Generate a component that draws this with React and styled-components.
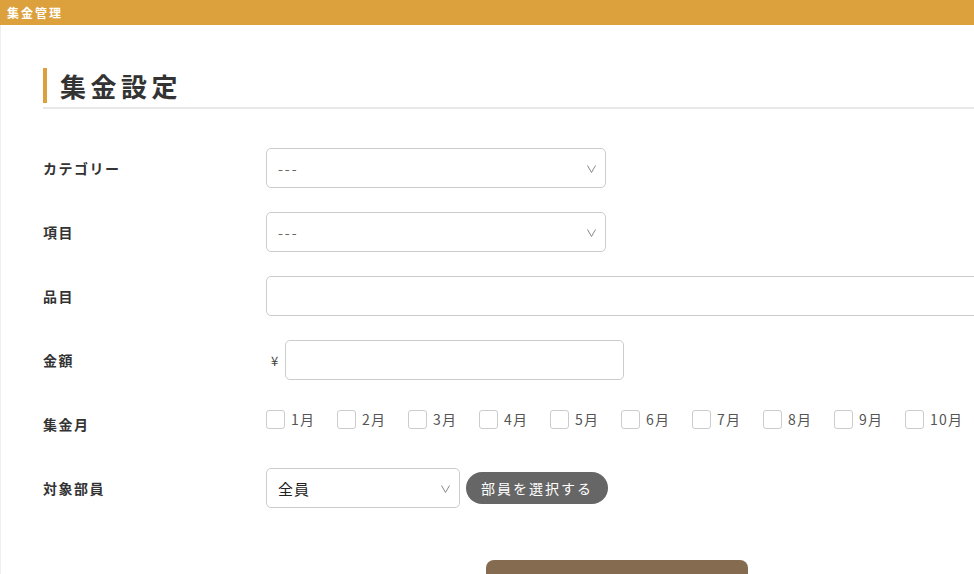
import React from "react";
import styled, { createGlobalStyle } from "styled-components";

const Global = createGlobalStyle`
  html, body { margin: 0; padding: 0; background: #fff; overflow: hidden; }
  body { font-family: "Noto Sans CJK JP", "Noto Sans", sans-serif; color: #333; }
  * { box-sizing: border-box; }
`;

const Page = styled.div`
  width: 974px;
  height: 574px;
  overflow: hidden;
`;

const TopBar = styled.header`
  height: 25px;
  background: #dca13c;
  color: #fff;
  font-size: 12px;
  font-weight: 700;
  line-height: 25px;
  padding-left: 7px;
  letter-spacing: 2px;
`;

const Main = styled.main`
  border-left: 1px solid #eee;
  padding: 43px 0 0 42px;
  height: 549px;
  overflow: hidden;
`;

const HeadingWrap = styled.div`
  border-bottom: 2px solid #e8e8e8;
  padding-bottom: 4px;
  margin-bottom: 39px;
`;

const Heading = styled.h1`
  margin: 0;
  border-left: 4px solid #dca13c;
  padding-left: 13px;
  height: 35px;
  line-height: 35px;
  font-size: 26px;
  font-weight: 700;
  letter-spacing: 4.5px;
  color: #333;
`;

const Row = styled.div`
  display: flex;
  align-items: ${(p) => (p.$top ? "flex-start" : "center")};
  min-height: 40px;
  margin-bottom: 24px;
`;

const Label = styled.div`
  width: 223px;
  flex: none;
  font-size: 14px;
  font-weight: 700;
  color: #333;
  line-height: 40px;
  letter-spacing: 1.5px;
`;

const SelectBox = styled.div`
  position: relative;
  flex: none;
  width: ${(p) => p.$w}px;
  height: 40px;
  border: 1px solid #ccc;
  border-radius: 5px;
  background: #fff;
  display: flex;
  align-items: center;
  padding-left: 11px;
  font-size: ${(p) => (p.$dark ? "15px" : "14px")};
  letter-spacing: ${(p) => (p.$dark ? "1px" : "2px")};
  color: ${(p) => (p.$dark ? "#222" : "#666")};
`;

const Chevron = styled.svg`
  position: absolute;
  right: 9px;
  top: 16px;
`;

const TextInput = styled.div`
  flex: none;
  width: ${(p) => p.$w}px;
  height: 40px;
  border: 1px solid #ccc;
  border-radius: 5px;
  background: #fff;
`;

const Yen = styled.span`
  font-size: 13px;
  color: #444;
  margin: 0 7px 0 5px;
`;

const Checks = styled.div`
  display: flex;
  padding-top: 5px;
`;

const CheckItem = styled.label`
  display: flex;
  align-items: center;
  width: 71px;
  flex: none;
  font-size: 14px;
  color: #555;
  letter-spacing: 1.2px;
`;

const Box = styled.span`
  width: 19px;
  height: 19px;
  border: 1px solid #ccc;
  border-radius: 3px;
  background: #fff;
  margin-right: 6px;
`;

const PillButton = styled.button`
  flex: none;
  margin-left: 6px;
  height: 32px;
  padding: 0 15px;
  border: none;
  border-radius: 16px;
  background: #666;
  color: #fff;
  font-family: inherit;
  font-size: 14px;
  letter-spacing: 2px;
`;

const SubmitWrap = styled.div`
  padding-left: 443px;
  padding-top: 28px;
`;

const Submit = styled.button`
  width: 262px;
  height: 50px;
  border: none;
  border-radius: 8px;
  background: #856b4f;
`;

const Arrow = () => (
  <Chevron width="9" height="8" viewBox="0 0 9 8">
    <path d="M0.5 0.5 L4.5 7.5 L8.5 0.5" fill="none" stroke="#888" strokeWidth="1" />
  </Chevron>
);

const months = ["1月", "2月", "3月", "4月", "5月", "6月", "7月", "8月", "9月", "10月"];

export default function App() {
  return (
    <Page>
      <Global />
      <TopBar>集金管理</TopBar>
      <Main>
        <HeadingWrap>
          <Heading>集金設定</Heading>
        </HeadingWrap>
        <Row>
          <Label>カテゴリー</Label>
          <SelectBox $w={340}>---<Arrow /></SelectBox>
        </Row>
        <Row>
          <Label>項目</Label>
          <SelectBox $w={340}>---<Arrow /></SelectBox>
        </Row>
        <Row>
          <Label>品目</Label>
          <TextInput $w={760} />
        </Row>
        <Row>
          <Label>金額</Label>
          <Yen>¥</Yen>
          <TextInput $w={339} />
        </Row>
        <Row $top>
          <Label>集金月</Label>
          <Checks>
            {months.map((m) => (
              <CheckItem key={m}>
                <Box />
                {m}
              </CheckItem>
            ))}
          </Checks>
        </Row>
        <Row>
          <Label>対象部員</Label>
          <SelectBox $w={194} $dark>全員<Arrow /></SelectBox>
          <PillButton>部員を選択する</PillButton>
        </Row>
        <SubmitWrap>
          <Submit />
        </SubmitWrap>
      </Main>
    </Page>
  );
}
